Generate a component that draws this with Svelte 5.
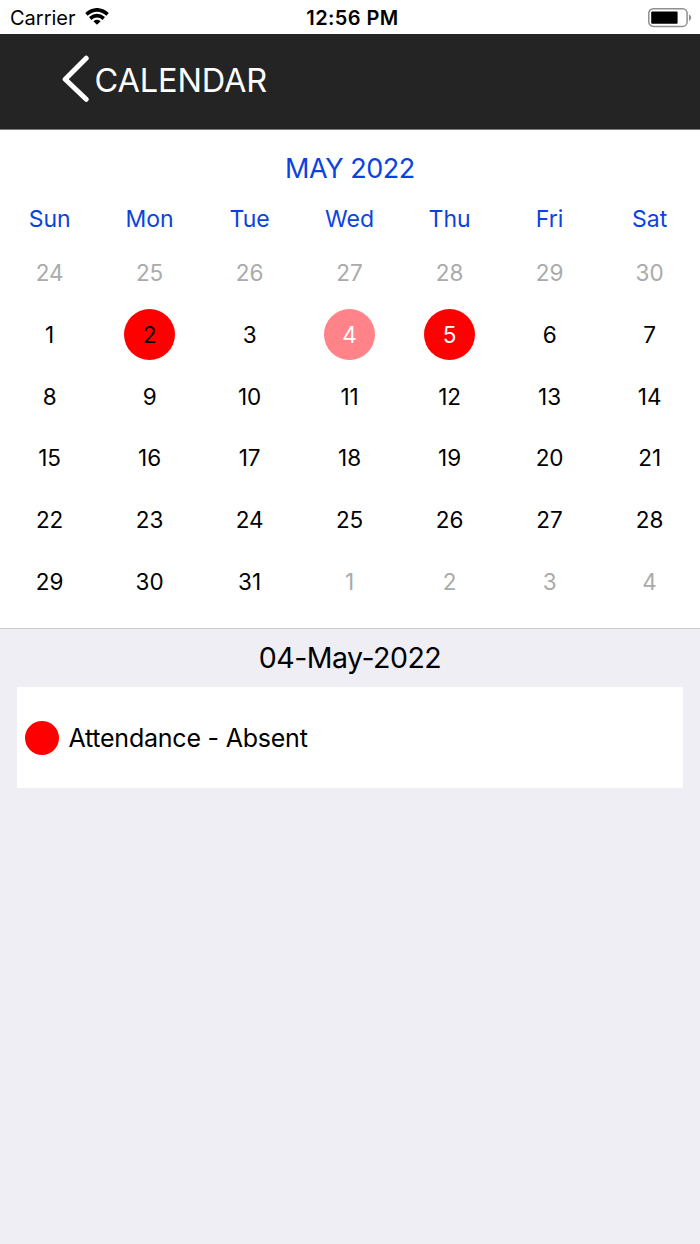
<script>
  const weekdays = ['Sun', 'Mon', 'Tue', 'Wed', 'Thu', 'Fri', 'Sat'];
  const firstCell = new Date(2022, 3, 24);
  const marks = { 2: 'marked', 4: 'selected', 5: 'today' };

  const days = Array.from({ length: 42 }, (_, i) => {
    const date = new Date(2022, 3, firstCell.getDate() + i);
    const inMonth = date.getMonth() === 4;
    return { number: date.getDate(), inMonth, mark: inMonth ? marks[date.getDate()] ?? '' : '' };
  });

  const events = [{ title: 'Attendance - Absent' }];

  let title = $state('CALENDAR');
</script>

<div class="screen">
  <div class="status">
    <div class="status-left">
      <span class="carrier">Carrier</span>
      <svg class="wifi" width="24" height="18" viewBox="0 0 24 18">
        <g fill="none" stroke="#000" stroke-width="3.7">
          <path d="M1.4 6.3Q12-2.5 22.6 6.3" />
          <path d="M5.2 10.5Q12 4.8 18.8 10.5" />
        </g>
        <path d="M8.4 13.2Q12 10.4 15.6 13.2L12 16.8Z" fill="#000" />
      </svg>
    </div>
    <span class="clock">12:56 PM</span>
    <div class="status-right">
      <svg width="44" height="20" viewBox="0 0 44 20">
        <rect x="0.8" y="0.8" width="38.3" height="17.6" rx="4.5" fill="none" stroke="#8f8f8f" stroke-width="1.5" />
        <rect x="3.2" y="3.4" width="26.4" height="12.3" rx="1" fill="#000" />
        <path d="M41 6.3Q43.2 7.4 43.2 9.6T41 12.9Z" fill="#8f8f8f" />
      </svg>
    </div>
  </div>

  <header class="header">
    <svg class="back" width="28" height="48" viewBox="0 0 28 48">
      <path d="M24.2 3.2L3.2 24.2L24.2 44.3" fill="none" stroke="#fff" stroke-width="5" stroke-linecap="round" stroke-linejoin="round" />
    </svg>
    <h1 class="title">{title}</h1>
  </header>

  <section class="calendar">
    <h2 class="month">MAY 2022</h2>
    <div class="weekdays">
      {#each weekdays as day}
        <span>{day}</span>
      {/each}
    </div>
    <div class="days">
      {#each days as day}
        <div class="cell">
          <span class="day {day.mark}" class:outside={!day.inMonth}>{day.number}</span>
        </div>
      {/each}
    </div>
  </section>

  <section class="agenda">
    <h3 class="date">04-May-2022</h3>
    {#each events as event}
      <div class="event">
        <span class="dot"></span>
        <span class="event-title">{event.title}</span>
      </div>
    {/each}
  </section>
</div>

<style>
  :global(body) {
    margin: 0;
    background: #efeef4;
  }
  .screen {
    width: 700px;
    height: 1244px;
    display: flex;
    flex-direction: column;
    font-family: Inter, "Liberation Sans", sans-serif;
    color: #000;
    background: #efeef4;
    overflow: hidden;
  }
  h1, h2, h3 {
    margin: 0;
    font-weight: 400;
  }

  .status {
    height: 34px;
    display: grid;
    grid-template-columns: 1fr auto 1fr;
    align-items: center;
    padding: 0 8px 0 10px;
    box-sizing: border-box;
    background: #fff;
    font-size: 20px;
  }
  .status-left {
    display: flex;
    align-items: center;
    gap: 9px;
  }
  .wifi { margin-bottom: 1px; }
  .carrier { line-height: 34px; padding-top: 1px; }
  .clock {
    font-weight: 600;
    line-height: 34px;
    padding: 1px 0 0 3px;
    letter-spacing: 0.4px;
  }
  .status-right {
    display: flex;
    justify-content: flex-end;
  }

  .header {
    height: 96px;
    box-sizing: border-box;
    display: flex;
    align-items: center;
    padding: 0 62px 5px;
    gap: 4.6px;
    background: #242424;
    border-bottom: 1px solid #7b7b7b;
  }
  .title {
    color: #fff;
    font-size: 32.5px;
    line-height: 40px;
    letter-spacing: -0.15px;
    padding-top: 3px;
  }

  .calendar {
    height: 499px;
    box-sizing: border-box;
    padding-top: 19px;
    background: #fff;
    border-bottom: 1px solid #c9c9cc;
  }
  .month {
    color: #0b43e0;
    font-size: 27px;
    line-height: 40px;
    letter-spacing: -0.45px;
    text-align: center;
  }
  .weekdays {
    display: grid;
    grid-template-columns: repeat(7, 1fr);
    margin: 10px 0.4px 0 -0.4px;
    color: #0b43e0;
    font-size: 23px;
    line-height: 40px;
    text-align: center;
  }
  .days {
    display: grid;
    grid-template-columns: repeat(7, 1fr);
    grid-auto-rows: 61.7px;
    margin: 3px 0.4px 0 -0.4px;
  }
  .cell {
    display: flex;
    align-items: center;
    justify-content: center;
  }
  .day {
    width: 51.4px;
    height: 51.4px;
    border-radius: 50%;
    font-size: 22.5px;
    line-height: 52px;
    text-align: center;
  }
  .outside { color: #aaa; }
  .marked { background: #f00; }
  .selected {
    background: #ff8388;
    color: #fff;
  }
  .today {
    background: #f00;
    color: #fff;
  }

  .agenda {
    flex: 1;
    padding: 9px 17px 0;
  }
  .date {
    font-size: 28.5px;
    line-height: 40px;
    letter-spacing: -0.5px;
    text-align: center;
  }
  .event {
    height: 101px;
    display: flex;
    align-items: center;
    gap: 9px;
    margin-top: 9px;
    padding-left: 8.4px;
    background: #fff;
  }
  .dot {
    width: 34px;
    height: 34px;
    border-radius: 50%;
    background: #f00;
  }
  .event-title {
    font-size: 25px;
    line-height: 34px;
    letter-spacing: -0.22px;
  }
</style>
